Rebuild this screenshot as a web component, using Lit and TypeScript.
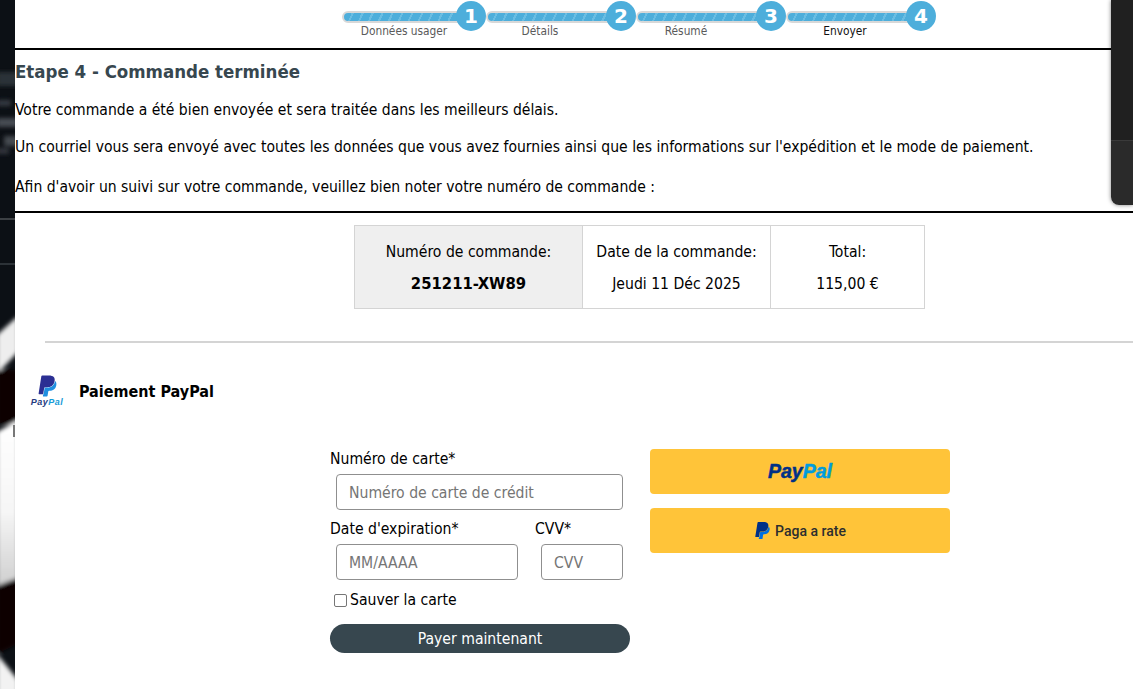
import { LitElement, html, css, svg } from "lit";
import { customElement } from "lit/decorators.js";

// labelShift: the labels in the wizard are not quite centred under their bars
const steps = [
  { num: "1", label: "Données usager", labelShift: 0 },
  { num: "2", label: "Détails", labelShift: -14 },
  { num: "3", label: "Résumé", labelShift: -18 },
  { num: "4", label: "Envoyer", labelShift: -9, current: true },
];

const ppMark = (dark: string, light: string) => svg`
  <path fill="${light}" d="M21.222 6.917a3.35 3.35 0 0 0-.607-.541c-.013.076-.026.175-.041.254-.93 4.778-4.005 7.201-9.138 7.201h-2.19a.563.563 0 0 0-.556.479l-1.187 7.527h-.506l-.24 1.516a.56.56 0 0 0 .554.647h3.882c.46 0 .85-.334.922-.788.06-.26.76-4.852.816-5.09a.932.932 0 0 1 .923-.788h.58c3.76 0 6.705-1.528 7.565-5.946.36-1.847.174-3.388-.777-4.471z"/>
  <path fill="${dark}" d="M7.076 21.337H2.47a.641.641 0 0 1-.633-.74L4.944.901C5.026.382 5.474 0 5.998 0h7.46c2.57 0 4.578.543 5.69 1.81 1.01 1.15 1.304 2.42 1.012 4.287-.023.143-.047.288-.077.437-.983 5.05-4.349 6.797-8.647 6.797h-2.19c-.524 0-.968.382-1.05.9l-1.12 7.106z"/>`;

@customElement("app-root")
export class AppRoot extends LitElement {
  static styles = css`
    :host {
      display: block;
      position: relative;
      height: 689px;
      overflow: hidden;
      font-family: "DejaVu Sans", sans-serif;
      font-stretch: condensed;
      color: #000;
      background: #fff;
    }
    .page {
      display: flex;
      height: 689px;
    }
    .strip {
      flex: 0 0 15px;
      height: 689px;
      background: #0c1015;
    }
    .strip svg {
      display: block;
    }
    .main {
      flex: 1;
      min-width: 0;
    }
    .steps {
      display: flex;
      height: 48px;
      padding-left: 321px;
    }
    .step {
      position: relative;
      width: 150px;
      height: 48px;
    }
    .bar {
      position: absolute;
      left: 0;
      right: 14px;
      top: 11px;
      height: 12px;
      border-radius: 6px;
      background: repeating-linear-gradient(115deg, #4daedb 0 7px, #6bbde2 7px 9px);
      border: 2px solid #d8d8d8;
      box-sizing: border-box;
    }
    .step:first-child .bar {
      left: 6px;
    }
    .num {
      position: absolute;
      right: 0;
      top: 1px;
      width: 30px;
      height: 30px;
      border-radius: 50%;
      background: #4daedb;
      color: #fff;
      font: bold 20px/30px "DejaVu Sans", sans-serif;
      text-align: center;
    }
    .step-label {
      position: absolute;
      left: 0;
      right: 14px;
      top: 24px;
      font-size: 11.8px;
      line-height: 15px;
      text-align: center;
      color: #5a5a5a;
    }
    .step-label.current {
      color: #111;
    }
    .intro {
      border-top: 2px solid #000;
      border-bottom: 2px solid #000;
      height: 161px;
    }
    h3 {
      margin: 0;
      padding-top: 11px;
      font-size: 18.5px;
      line-height: 22px;
      font-weight: bold;
      color: #37474f;
    }
    .intro p {
      margin: 15px 0 0;
      font-size: 15.55px;
      line-height: 22px;
    }
    .intro h3 + p {
      margin-top: 16px;
    }
    .intro p:last-child {
      margin-top: 18px;
    }
    .summary {
      display: grid;
      grid-template-columns: 227px 188px 154px;
      width: 571px;
      margin: 12px 0 0 339px;
      border: 1px solid #d4d4d4;
      box-sizing: border-box;
      height: 84px;
      text-align: center;
      font-size: 15.6px;
    }
    .cell {
      border-left: 1px solid #d4d4d4;
      padding-top: 15px;
      line-height: 22px;
    }
    .cell:first-child {
      border-left: 0;
      background: #efefef;
    }
    .cell div + div {
      margin-top: 10px;
    }
    .cell .ref {
      font-weight: bold;
      font-size: 16.5px;
    }
    .rule {
      height: 2px;
      background: #d4d4d4;
      margin: 32px 0 0 30px;
    }
    .pay-head {
      display: flex;
      align-items: center;
      height: 46px;
      margin: 25px 0 0 14px;
    }
    .logo {
      width: 36px;
      display: flex;
      flex-direction: column;
      align-items: center;
    }
    .logo span {
      font: italic bold 9px/9px "Liberation Sans", sans-serif;
      letter-spacing: 0.5px;
      color: #253b80;
      margin-top: 1px;
    }
    .logo span b {
      color: #179bd7;
    }
    .pay-title {
      margin-left: 14px;
      font-weight: bold;
      font-size: 16px;
    }
    .pay {
      display: flex;
      margin: 35px 0 0 315px;
    }
    .card {
      width: 300px;
      font-size: 15.6px;
    }
    .card label {
      display: block;
      line-height: 20px;
    }
    .field {
      display: block;
      box-sizing: border-box;
      height: 36px;
      margin: 5px 7px 0 6px;
      border: 1px solid #8f8f8f;
      border-radius: 4px;
      padding-left: 12px;
      line-height: 36px;
      color: #757575;
    }
    .row {
      display: flex;
      margin-top: 9px;
    }
    .exp {
      width: 205px;
    }
    .exp .field {
      margin-right: 17px;
    }
    .cvv {
      width: 95px;
    }
    .check {
      display: flex;
      align-items: center;
      height: 20px;
      margin: 10px 0 0 4px;
    }
    .box {
      width: 13px;
      height: 13px;
      box-sizing: border-box;
      border: 1px solid #767676;
      border-radius: 2px;
      margin-right: 3px;
    }
    .submit {
      height: 29px;
      margin-top: 14px;
      border-radius: 15px;
      background: #37474f;
      color: #fff;
      text-align: center;
      line-height: 31px;
    }
    .btns {
      width: 300px;
      margin-left: 20px;
    }
    .pp {
      display: flex;
      align-items: center;
      justify-content: center;
      height: 45px;
      border-radius: 4px;
      background: #ffc439;
      margin-bottom: 14px;
      color: #2c2e2f;
    }
    .pp-word {
      font: italic bold 19.5px "Liberation Sans", sans-serif;
      color: #003087;
      -webkit-text-stroke: 0.5px #003087;
    }
    .pp-word b {
      color: #009cde;
      -webkit-text-stroke: 0.5px #009cde;
    }
    .pp-rate {
      font-family: Roboto, sans-serif;
      font-stretch: normal;
      font-size: 14px;
      font-weight: 500;
      margin-left: 4px;
    }
    .dock {
      position: absolute;
      right: 0;
      top: 0;
      width: 22px;
      height: 205px;
      border-bottom-left-radius: 8px;
      background: linear-gradient(#202020 0 140px, #3a3a3a 140px 141px, #2a2a2a 141px);
      box-shadow: 0 0 4px rgba(0, 0, 0, 0.5);
    }
  `;

  // blurred photo slice that shows at the left of the white sheet
  private renderStrip() {
    return svg`
      <svg width="15" height="689" viewBox="0 0 15 689">
        <defs>
          <filter id="soft" x="-50%" y="-10%" width="200%" height="120%">
            <feGaussianBlur stdDeviation="2.2"></feGaussianBlur>
          </filter>
          <linearGradient id="fade" x1="0" y1="0" x2="0" y2="1">
            <stop offset="0" stop-color="#ffffff"></stop>
            <stop offset="0.55" stop-color="#f6f6f6"></stop>
            <stop offset="1" stop-color="#cfcfcf"></stop>
          </linearGradient>
        </defs>
        <rect width="15" height="689" fill="#0c1015"></rect>
        <g filter="url(#soft)">
          <rect x="-3" y="72" width="21" height="14" fill="#2a3038"></rect>
          <rect x="-3" y="100" width="14" height="6" fill="#343a42"></rect>
          <rect x="-3" y="118" width="21" height="9" fill="#464c52"></rect>
          <rect x="4" y="136" width="14" height="10" fill="#444a50"></rect>
          <rect x="-3" y="148" width="12" height="6" fill="#30363c"></rect>
          <polygon points="-3,335 18,316 18,352 -3,374" fill="#eeeeee"></polygon>
          <rect x="-3" y="370" width="21" height="54" fill="#090406"></rect>
          <polygon points="-3,432 18,420 18,578 -3,586" fill="url(#fade)"></polygon>
          <polygon points="-3,586 18,578 18,644 -3,654" fill="#080305"></polygon>
          <polygon points="-3,654 18,680 18,695 -3,695" fill="#f2f2f2"></polygon>
        </g>
        <rect y="218" width="15" height="2" fill="#3c4044"></rect>
        <rect y="263" width="15" height="2" fill="#2c3237"></rect>
        <rect x="13" y="425" width="2" height="12" fill="#777777"></rect>
      </svg>
    `;
  }

  render() {
    return html`
      <div class="page">
        <div class="strip">${this.renderStrip()}</div>
        <div class="main">
          <div class="steps">
            ${steps.map(
              (s) => html`
                <div class="step">
                  <div class="bar"></div>
                  <div class="num">${s.num}</div>
                  <div
                    class="step-label ${s.current ? "current" : ""}"
                    style="transform: translateX(${s.labelShift}px)"
                  >
                    ${s.label}
                  </div>
                </div>
              `
            )}
          </div>
          <div class="intro">
            <h3>Etape 4 - Commande terminée</h3>
            <p>Votre commande a été bien envoyée et sera traitée dans les meilleurs délais.</p>
            <p>Un courriel vous sera envoyé avec toutes les données que vous avez fournies ainsi que les informations sur l'expédition et le mode de paiement.</p>
            <p>Afin d'avoir un suivi sur votre commande, veuillez bien noter votre numéro de commande :</p>
          </div>
          <div class="summary">
            <div class="cell"><div>Numéro de commande:</div><div class="ref">251211-XW89</div></div>
            <div class="cell"><div>Date de la commande:</div><div>Jeudi 11 Déc 2025</div></div>
            <div class="cell"><div>Total:</div><div>115,00 €</div></div>
          </div>
          <div class="rule"></div>
          <div class="pay-head">
            <div class="logo">
              <svg width="21" height="22" viewBox="0 0 24 24">${ppMark("#2b2f93", "#1f8fe0")}</svg>
              <span>Pay<b>Pal</b></span>
            </div>
            <div class="pay-title">Paiement PayPal</div>
          </div>
          <div class="pay">
            <div class="card">
              <label>Numéro de carte*</label>
              <div class="field">Numéro de carte de crédit</div>
              <div class="row">
                <div class="exp">
                  <label>Date d'expiration*</label>
                  <div class="field">MM/AAAA</div>
                </div>
                <div class="cvv">
                  <label>CVV*</label>
                  <div class="field">CVV</div>
                </div>
              </div>
              <div class="check"><span class="box"></span>Sauver la carte</div>
              <div class="submit">Payer maintenant</div>
            </div>
            <div class="btns">
              <div class="pp"><span class="pp-word">Pay<b>Pal</b></span></div>
              <div class="pp">
                <svg width="17" height="19" viewBox="0 0 24 24">${ppMark("#003087", "#0070e0")}</svg>
                <span class="pp-rate">Paga a rate</span>
              </div>
            </div>
          </div>
        </div>
      </div>
      <div class="dock"></div>
    `;
  }
}
